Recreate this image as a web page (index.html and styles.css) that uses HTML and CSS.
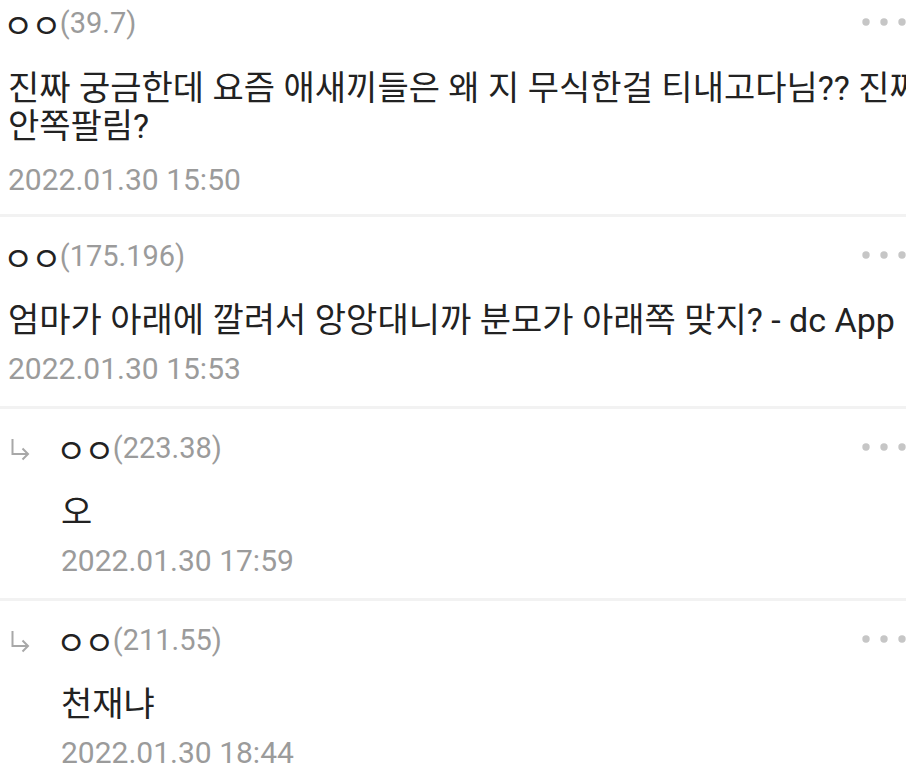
FILE: index.html
```html
<!DOCTYPE html>
<html lang="ko">
<head>
<meta charset="utf-8">
<link rel="stylesheet" href="styles.css">
</head>
<body>
<div class="list">
  <div class="item first">
    <div class="content">
      <div class="head">
        <span class="name"><span class="nick">ㅇㅇ</span><span class="ip">(39.7)</span></span>
        <svg class="more" width="44" height="10" viewBox="0 0 44 10"><circle cx="4" cy="5" r="3.7"/><circle cx="22" cy="5" r="3.7"/><circle cx="40" cy="5" r="3.7"/></svg>
      </div>
      <div class="body">진짜 궁금한데 요즘 애새끼들은 왜 지 무식한걸 티내고다님?? 진짜<br>안쪽팔림?</div>
      <div class="date">2022.01.30 15:50</div>
    </div>
  </div>
  <div class="item">
    <div class="content">
      <div class="head">
        <span class="name"><span class="nick">ㅇㅇ</span><span class="ip">(175.196)</span></span>
        <svg class="more" width="44" height="10" viewBox="0 0 44 10"><circle cx="4" cy="5" r="3.7"/><circle cx="22" cy="5" r="3.7"/><circle cx="40" cy="5" r="3.7"/></svg>
      </div>
      <div class="body">엄마가 아래에 깔려서 앙앙대니까 분모가 아래쪽 맞지? - dc App</div>
      <div class="date">2022.01.30 15:53</div>
    </div>
  </div>
  <div class="item reply">
    <div class="arrow">
      <svg width="26" height="26" viewBox="0 0 26 26"><path d="M4.5 2 V17 H20 M14.5 11.5 L20 17 L14.5 22.5" fill="none" stroke="#a8a8a8" stroke-width="2"/></svg>
    </div>
    <div class="content">
      <div class="head">
        <span class="name"><span class="nick">ㅇㅇ</span><span class="ip">(223.38)</span></span>
        <svg class="more" width="44" height="10" viewBox="0 0 44 10"><circle cx="4" cy="5" r="3.7"/><circle cx="22" cy="5" r="3.7"/><circle cx="40" cy="5" r="3.7"/></svg>
      </div>
      <div class="body">오</div>
      <div class="date">2022.01.30 17:59</div>
    </div>
  </div>
  <div class="item reply last">
    <div class="arrow">
      <svg width="26" height="26" viewBox="0 0 26 26"><path d="M4.5 2 V17 H20 M14.5 11.5 L20 17 L14.5 22.5" fill="none" stroke="#a8a8a8" stroke-width="2"/></svg>
    </div>
    <div class="content">
      <div class="head">
        <span class="name"><span class="nick">ㅇㅇ</span><span class="ip">(211.55)</span></span>
        <svg class="more" width="44" height="10" viewBox="0 0 44 10"><circle cx="4" cy="5" r="3.7"/><circle cx="22" cy="5" r="3.7"/><circle cx="40" cy="5" r="3.7"/></svg>
      </div>
      <div class="body">천재냐</div>
      <div class="date">2022.01.30 18:44</div>
    </div>
  </div>
</div>
</body>
</html>
```
FILE: styles.css
```css
html, body {
  margin: 0;
  padding: 0;
  background: #ffffff;
}
body {
  font-family: Roboto, "Noto Sans CJK KR", sans-serif;
  color: #222222;
  overflow: hidden;
}
.list {
  width: 906px;
  overflow: hidden;
}
.item {
  display: flex;
  padding: 19px 0 17px 8px;
  border-bottom: 3px solid #f2f2f2;
}
.item.first {
  padding-top: 3px;
  padding-bottom: 14px;
}
.item.last {
  border-bottom: none;
}
.content {
  flex: 1;
  min-width: 0;
}
.head {
  display: flex;
  justify-content: space-between;
  align-items: center;
  height: 40px;
}
.name {
  display: flex;
  align-items: center;
  white-space: nowrap;
}
.nick {
  display: inline-block;
  font-family: "Noto Sans CJK KR", sans-serif;
  font-size: 33px;
  line-height: 40px;
  padding-top: 2px;
  color: #222222;
  letter-spacing: -2px;
  margin-left: -5px;
}
.ip {
  font-family: Roboto, sans-serif;
  font-size: 29px;
  line-height: 40px;
  color: #9b9b9b;
  margin-left: 0;
}
.more {
  fill: #c6c6c6;
  margin-top: -2px;
}
.body {
  margin-top: 25px;
  font-size: 34px;
  line-height: 38px;
  color: #222222;
  white-space: nowrap;
}
.first .body {
  margin-top: 26px;
}
.date {
  margin-top: 10px;
  font-size: 30px;
  line-height: 40px;
  color: #9b9b9b;
}
.first .date {
  margin-top: 15px;
}
.arrow {
  width: 53px;
  flex: none;
  padding-top: 9px;
}
```
